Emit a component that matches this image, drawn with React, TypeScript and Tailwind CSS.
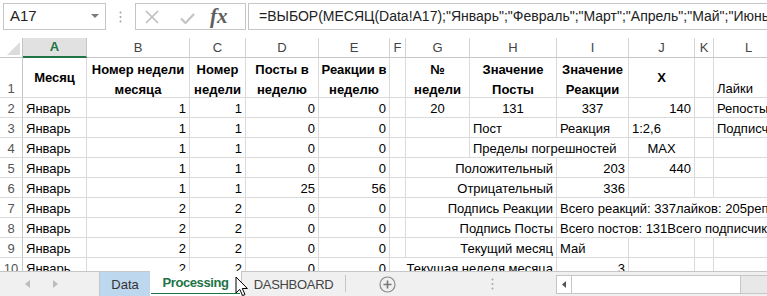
import React from "react";

type Align = "l" | "c" | "r";
type Cell = { t?: string; a?: Align; b?: boolean; nr?: boolean; m?: boolean };

const E: Cell = {};
const NR: Cell = { nr: true };
const l = (t: string, x: Partial<Cell> = {}): Cell => ({ t, a: "l", ...x });
const c = (t: string, x: Partial<Cell> = {}): Cell => ({ t, a: "c", ...x });
const r = (t: string, x: Partial<Cell> = {}): Cell => ({ t, a: "r", ...x });

const letters = ["A", "B", "C", "D", "E", "F", "G", "H", "I", "J", "K", "L"];

const left = (b: string, cc: string, d: string, e: string): Cell[] => [
    l("Январь"),
    r(b),
    r(cc),
    r(d),
    r(e)
];

const rows: Cell[][] = [
    [
        c("Месяц", { b: true, m: true }),
        c("Номер недели\nмесяца", { b: true }),
        c("Номер\nнедели", { b: true }),
        c("Посты в\nнеделю", { b: true }),
        c("Реакции в\nнеделю", { b: true }),
        E,
        c("№\nнедели", { b: true }),
        c("Значение\nПосты", { b: true }),
        c("Значение\nРеакции", { b: true }),
        c("X", { b: true, m: true }),
        E,
        l("Лайки")
    ],
    [...left("1", "1", "0", "0"), E, c("20"), c("131"), c("337"), r("140"), E, l("Репосты")],
    [...left("1", "1", "0", "0"), E, E, l("Пост"), l("Реакция"), l("1:2,6"), E, l("Подписчики")],
    [...left("1", "1", "0", "0"), E, E, l("Пределы погрешностей", { nr: true }), E, c("MAX"), E, E],
    [...left("1", "1", "0", "0"), E, NR, r("Положительный"), r("203"), r("440"), E, E],
    [...left("1", "1", "25", "56"), E, NR, r("Отрицательный"), r("336"), E, E, E],
    [
        ...left("2", "2", "0", "0"),
        E,
        NR,
        r("Подпись Реакции"),
        l("Всего реакций: 337лайков: 205репостов: 132", { nr: true }),
        NR,
        NR,
        E
    ],
    [
        ...left("2", "2", "0", "0"),
        E,
        NR,
        r("Подпись Посты"),
        l("Всего постов: 131Всего подписчиков: 980", { nr: true }),
        NR,
        NR,
        E
    ],
    [...left("2", "2", "0", "0"), E, NR, r("Текущий месяц"), l("Май"), E, E, E],
    [...left("2", "2", "0", "0"), NR, NR, r("Текущая неделя месяца"), r("3"), E, E, E]
];

const justify: Record<Align, string> = {
    l: "justify-start pl-[3px]",
    c: "justify-center",
    r: "justify-end pr-[3px]"
};

function GridCell({ cell }: { cell: Cell }) {
    const a = cell.a ?? "l";
    const multi = cell.t?.includes("\n");
    return (
        <div
            className={`flex min-w-0 border-b border-r border-b-[#dadada] ${
                cell.nr ? "border-r-transparent" : "border-r-[#dadada]"
            } ${cell.m ? "items-center" : "items-end"} ${justify[a]}`}>
            {cell.t && (
                <span
                    className={`whitespace-pre ${cell.b ? "font-bold" : ""} ${
                        multi ? "text-center leading-[20px] -mb-[3px]" : "leading-[16px]"
                    }`}>
                    {cell.t}
                </span>
            )}
        </div>
    );
}

function Formula() {
    return (
        <div className="flex h-[38px] items-start pt-[3px]">
            <div className="ml-[3px] flex h-[27px] w-[103px] items-center justify-between border border-[#c6c6c6] pl-[6px] pr-[6px] text-[15px] text-[#222]">
                <span>A17</span>
                <svg width="8" height="5" viewBox="0 0 8 5">
                    <polygon points="0,0 8,0 4,4" fill="#7a7a7a" />
                </svg>
            </div>
            <div className="flex h-[27px] w-[29px] items-center justify-center">
                <svg width="3" height="12" viewBox="0 0 3 12">
                    <circle cx="1.5" cy="1.5" r="1" fill="#a0a0a0" />
                    <circle cx="1.5" cy="6" r="1" fill="#a0a0a0" />
                    <circle cx="1.5" cy="10.5" r="1" fill="#a0a0a0" />
                </svg>
            </div>
            <div className="flex h-[27px] w-[111px] items-center border border-[#c6c6c6]">
                <svg width="14" height="14" viewBox="0 0 14 14" className="ml-[9px]">
                    <path d="M1 1 L13 13 M13 1 L1 13" stroke="#bdbdbd" strokeWidth="1.6" />
                </svg>
                <svg width="15" height="11" viewBox="0 0 15 11" className="ml-[21px] mt-[3px]">
                    <path d="M1 5.5 L5.5 10 L14 1" stroke="#c4c4c4" strokeWidth="2.2" fill="none" />
                </svg>
                <span className="ml-[15px] font-['Liberation_Serif',serif] text-[21px] font-bold italic leading-none text-[#5e5e5e]">
                    fx
                </span>
            </div>
            <div className="ml-[2px] flex h-[27px] flex-1 items-center overflow-hidden border border-r-0 border-[#c6c6c6] pl-[10px] text-[14px] whitespace-nowrap text-[#222]">
                =ВЫБОР(МЕСЯЦ(Data!A17);"Январь";"Февраль";"Март";"Апрель";"Май";"Июнь";"Июль";"Август")
            </div>
        </div>
    );
}

function Sheet() {
    return (
        <div className="h-[233px] overflow-hidden">
            <div className="grid grid-cols-[23px_64px_103px_56px_73px_71px_16px_64px_87px_72px_66px_19px_70px] grid-rows-[20px_40px_repeat(9,20px)] text-[13px] text-black">
                <div className="flex items-end justify-end border-b border-r border-[#c6c6c6] pb-[2px] pr-[2px]">
                    <svg width="13" height="13" viewBox="0 0 13 13">
                        <polygon points="13,0 13,13 0,13" fill="#dcdcdc" />
                    </svg>
                </div>
                {letters.map((L) =>
                    L === "A" ? (
                        <div
                            key={L}
                            className="flex items-center justify-center border-b-2 border-r border-b-[#217346] border-r-[#c6c6c6] bg-[#e1e1e1] font-bold text-[#217346]">
                            {L}
                        </div>
                    ) : (
                        <div
                            key={L}
                            className="flex items-center justify-center border-b border-r border-[#d4d4d4] border-b-[#c6c6c6] text-[#444]">
                            {L}
                        </div>
                    )
                )}
                {rows.map((row, i) => (
                    <React.Fragment key={i}>
                        <div className="flex items-end justify-center border-b border-r border-b-[#dadada] border-r-[#c6c6c6] leading-[16px] text-[#555]">
                            {i + 1}
                        </div>
                        {row.map((cell, j) => (
                            <GridCell key={j} cell={cell} />
                        ))}
                    </React.Fragment>
                ))}
            </div>
        </div>
    );
}

function Tabs() {
    return (
        <div className="flex h-[25px] border-t border-[#c6c6c6] bg-[#f0f0f0] text-[13px]">
            <div className="flex w-[99px] items-center">
                <svg width="5" height="8" viewBox="0 0 5 8" className="ml-[25px]">
                    <polygon points="5,0 5,8 0,4" fill="#bcbcbc" />
                </svg>
                <svg width="5" height="8" viewBox="0 0 5 8" className="ml-[23px]">
                    <polygon points="0,0 0,8 5,4" fill="#bcbcbc" />
                </svg>
            </div>
            <div className="flex w-[51px] items-center justify-center border-l border-[#c6c6c6] bg-[#bdd7ee] pt-[1px] text-[#333]">
                Data
            </div>
            <div className="-mt-px flex w-[92px] flex-col border-r border-[#c6c6c6] bg-white">
                <div className="flex flex-1 items-center justify-center pt-[2px] font-bold tracking-[-0.4px] text-[#217346]">
                    Processing
                </div>
                <div className="mx-px mb-[2px] h-[2px] bg-[#217346]" />
            </div>
            <div className="flex w-[103px] items-center justify-center pt-[1px] tracking-[-0.3px] text-[#444]">
                DASHBOARD
            </div>
            <div className="mt-[3px] h-[17px] w-px bg-[#c6c6c6]" />
            <div className="flex w-[83px] items-center justify-center">
                <svg width="17" height="17" viewBox="0 0 17 17">
                    <circle cx="8.5" cy="8.5" r="7.5" fill="none" stroke="#8a8a8a" strokeWidth="1.2" />
                    <path d="M8.5 4.5 V12.5 M4.5 8.5 H12.5" stroke="#777" strokeWidth="1.6" />
                </svg>
            </div>
            <div className="flex w-[127px] items-center justify-center">
                <svg width="3" height="12" viewBox="0 0 3 12">
                    <circle cx="1.5" cy="1.5" r="1" fill="#a8a8a8" />
                    <circle cx="1.5" cy="6" r="1" fill="#a8a8a8" />
                    <circle cx="1.5" cy="10.5" r="1" fill="#a8a8a8" />
                </svg>
            </div>
            <div className="mt-[3px] flex h-[19px] flex-1 border border-r-0 border-[#c6c6c6] bg-[#e8e8e8]">
                <div className="flex w-[15px] items-center justify-center border-r border-[#c6c6c6] bg-white">
                    <svg width="4" height="7" viewBox="0 0 4 7">
                        <polygon points="4,0 4,7 0,3.5" fill="#555" />
                    </svg>
                </div>
                <div className="w-[169px] border-r border-[#c6c6c6] bg-white" />
            </div>
        </div>
    );
}

export default function App() {
    return (
        <div className="relative h-[296px] w-[767px] overflow-hidden bg-white font-['Liberation_Sans',Arial,sans-serif]">
            <Formula />
            <Sheet />
            <Tabs />
            <svg
                width="14"
                height="21"
                viewBox="0 0 14 21"
                className="absolute left-[235px] top-[276px]">
                <path
                    d="M1 1 L1 17 L4.8 13.4 L7.6 19.6 L10 18.5 L7.3 12.5 L12.4 12.5 Z"
                    fill="white"
                    stroke="black"
                    strokeWidth="1"
                    strokeLinejoin="round"
                />
            </svg>
        </div>
    );
}
